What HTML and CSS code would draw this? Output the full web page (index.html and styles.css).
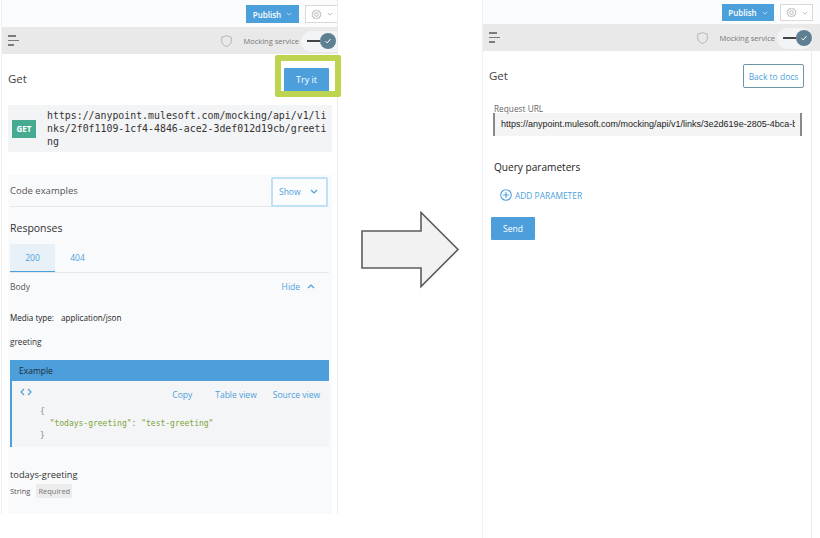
FILE: index.html
```html
<!DOCTYPE html>
<html lang="en">
<head>
    <meta charset="UTF-8">
    <title>Mocking service - Try it</title>
    <link rel="stylesheet" href="styles.css">
</head>
<body>
    <div class="stage">
        <!-- docs view -->
        <section class="panel panel-docs">
            <div class="topstrip">
                <button class="btn-publish">Publish <svg class="chev-sm" viewBox="0 0 8 5"><path d="M1 1l3 3 3-3"/></svg></button>
                <button class="btn-gear">
                    <svg class="gear" viewBox="0 0 12 12"><circle cx="6" cy="6" r="2"/><path d="M6 1l1.2 1.2 1.7-.3.4 1.7 1.6.7-.7 1.7.7 1.7-1.6.6-.4 1.7-1.7-.3L6 11l-1.2-1.2-1.7.3-.4-1.7-1.6-.6.7-1.8-.7-1.7 1.6-.6.4-1.7 1.7.3z"/></svg>
                    <svg class="chev-sm chev-grey" viewBox="0 0 8 5"><path d="M1 1l3 3 3-3"/></svg>
                </button>
            </div>
            <div class="toolbar">
                <div class="burger"><i class="l1"></i><i class="l2"></i><i class="l3"></i></div>
                <svg class="shield" viewBox="0 0 11 12"><path d="M5.5.7L10.3 2.2V6c0 2.8-2 4.5-4.8 5.4C2.7 10.5.7 8.8.7 6V2.2z"/></svg>
                <span class="mock-label">Mocking service</span>
                <div class="toggle"><span class="track"></span><span class="thumb"><svg viewBox="0 0 8 8"><path d="M1.5 4.2l1.7 1.7 3.3-3.8"/></svg></span></div>
            </div>
            <div class="head head-docs">
                <h2>Get</h2>
                <button class="btn-primary btn-try">Try it</button>
            </div>
            <div class="highlight"></div>
            <div class="url-box">
                <span class="badge-get">GET</span>
                <code class="url-text">https://anypoint.mulesoft.com/mocking/api/v1/links/2f0f1109-1cf4-4846-ace2-3def012d19cb/greeting</code>
            </div>
            <div class="docs-body">
                <div class="code-row">
                    <span class="code-title">Code examples</span>
                    <button class="btn-show">Show <svg class="chev" viewBox="0 0 8 5"><path d="M1 1l3 3 3-3"/></svg></button>
                </div>
                <h3 class="responses">Responses</h3>
                <div class="tabs">
                    <span class="tab tab-on">200</span>
                    <span class="tab">404</span>
                </div>
                <div class="body-row">
                    <span>Body</span>
                    <span class="hide-link">Hide <svg class="chev" viewBox="0 0 8 5"><path d="M1 4l3-3 3 3"/></svg></span>
                </div>
                <p class="media"><span class="media-key">Media type:</span> application/json</p>
                <p class="greet">greeting</p>
                <div class="example">
                    <div class="example-head">Example</div>
                    <div class="example-body">
                        <div class="example-tools">
                            <svg class="code-icon" viewBox="0 0 12 8"><path d="M4 1L1 4l3 3M8 1l3 3-3 3"/></svg>
                            <span class="tool tool-copy">Copy</span>
                            <span class="tool tool-table">Table view</span>
                            <span class="tool">Source view</span>
                        </div>
                        <pre class="json"><span class="p">{</span>
  <span class="s">"todays-greeting"</span><span class="p">:</span> <span class="s">"test-greeting"</span>
<span class="p">}</span></pre>
                    </div>
                </div>
                <div class="prop-name">todays-greeting</div>
                <div class="prop-meta"><span>String</span><span class="chip">Required</span></div>
            </div>
        </section>

        <svg class="arrow" viewBox="0 0 100 78"><path d="M2 20H61V1.5L98 38.5 61 75.5V57H2z"/></svg>

        <!-- try it view -->
        <section class="panel panel-try">
            <div class="topstrip topstrip-try">
                <button class="btn-publish">Publish <svg class="chev-sm" viewBox="0 0 8 5"><path d="M1 1l3 3 3-3"/></svg></button>
                <button class="btn-gear btn-gear-full">
                    <svg class="gear" viewBox="0 0 12 12"><circle cx="6" cy="6" r="2"/><path d="M6 1l1.2 1.2 1.7-.3.4 1.7 1.6.7-.7 1.7.7 1.7-1.6.6-.4 1.7-1.7-.3L6 11l-1.2-1.2-1.7.3-.4-1.7-1.6-.6.7-1.8-.7-1.7 1.6-.6.4-1.7 1.7.3z"/></svg>
                    <svg class="chev-sm chev-grey" viewBox="0 0 8 5"><path d="M1 1l3 3 3-3"/></svg>
                </button>
            </div>
            <div class="toolbar toolbar-try">
                <div class="burger"><i class="l1"></i><i class="l2"></i><i class="l3"></i></div>
                <svg class="shield" viewBox="0 0 11 12"><path d="M5.5.7L10.3 2.2V6c0 2.8-2 4.5-4.8 5.4C2.7 10.5.7 8.8.7 6V2.2z"/></svg>
                <span class="mock-label">Mocking service</span>
                <div class="toggle toggle-full"><span class="track"></span><span class="thumb"><svg viewBox="0 0 8 8"><path d="M1.5 4.2l1.7 1.7 3.3-3.8"/></svg></span></div>
            </div>
            <div class="head head-try">
                <h2>Get</h2>
                <button class="btn-back">Back to docs</button>
            </div>
            <div class="form">
                <label class="url-label">Request URL</label>
                <div class="url-input"><span class="url-value">https://anypoint.mulesoft.com/mocking/api/v1/links/3e2d619e-2805-4bca-b</span></div>
                <h3 class="query">Query parameters</h3>
                <div class="add-param">
                    <svg class="plus" viewBox="0 0 12 12"><circle cx="6" cy="6" r="5.3"/><path d="M6 3v6M3 6h6"/></svg>
                    ADD PARAMETER
                </div>
                <button class="btn-primary btn-send">Send</button>
            </div>
        </section>
    </div>
</body>
</html>
```

FILE: styles.css
```css
* {
    box-sizing: border-box;
}
body {
    margin: 0;
    background: #fff;
    font-family: "Open Sans", "Liberation Sans", sans-serif;
    color: #333;
}
button {
    font-family: inherit;
    cursor: pointer;
}
h2, h3, p, pre {
    margin: 0;
    font-weight: 400;
}
.stage {
    display: flex;
    align-items: flex-start;
    width: 820px;
    height: 538px;
    overflow: hidden;
}
.panel {
    position: relative;
    border-left: 1px solid #f0f0f0;
    border-right: 1px solid #ececec;
}
.panel-docs {
    width: 337px;
    height: 514px;
    margin-left: 1px;
}
.panel-try {
    flex: none;
    width: 330px;
    height: 538px;
    margin-left: 22px;
}
.arrow {
    flex: none;
    width: 100px;
    height: 78px;
    margin: 211px 0 0 22px;
}
.arrow path {
    fill: #f2f2f2;
    stroke: #5c5c5c;
    stroke-width: 1.6;
}

/* top strip */
.topstrip {
    display: flex;
    justify-content: flex-end;
    gap: 6px;
    height: 27px;
    padding-top: 5px;
    background: #fbfcfd;
}
.topstrip-try {
    height: 24px;
    margin-right: -9px;
    padding-top: 4px;
    padding-right: 7px;
}
.btn-publish {
    display: flex;
    align-items: center;
    justify-content: center;
    gap: 5px;
    width: 53px;
    height: 18px;
    padding: 0;
    border: 0;
    background: #4b9fdb;
    color: #fff;
    font-size: 8px;
    font-weight: 600;
}
.topstrip-try .btn-publish {
    width: 52px;
    height: 17px;
}
.btn-gear {
    display: flex;
    align-items: center;
    gap: 5px;
    width: 32px;
    height: 18px;
    padding: 0 0 0 5px;
    border: 1px solid #d9d9d9;
    border-right: 0;
    background: #fff;
}
.btn-gear-full {
    width: 33px;
    height: 17px;
    border-right: 1px solid #d9d9d9;
}
.gear {
    width: 11px;
    height: 11px;
    fill: none;
    stroke: #a3a3a3;
    stroke-width: .8;
}
.chev-sm {
    width: 6px;
    height: 4px;
    fill: none;
    stroke: #dbeaf6;
    stroke-width: 1;
}
.chev-grey {
    stroke: #a8a8a8;
}

/* grey toolbar */
.toolbar {
    display: flex;
    align-items: center;
    height: 27px;
    padding-left: 6px;
    background: #e9e9e9;
}
.toolbar-try {
    margin-right: -9px;
    padding-right: 7px;
}
.burger {
    display: flex;
    flex-direction: column;
    gap: 3px;
    margin-right: auto;
}
.burger i {
    display: block;
    height: 1.5px;
    background: #7b7b7b;
}
.burger .l1 { width: 8px; }
.burger .l2 { width: 11px; }
.burger .l3 { width: 6px; }
.shield {
    width: 11px;
    height: 12px;
    margin-right: 11px;
    fill: none;
    stroke: #b0b0b0;
    stroke-width: .9;
}
.mock-label {
    margin-right: 2px;
    font-size: 7.5px;
    color: #777;
}
.toggle {
    display: flex;
    align-items: center;
    width: 36px;
    height: 21px;
    margin-top: 1px;
    padding-left: 6px;
    border-radius: 11px 0 0 11px;
    background: #f3f4f5;
}
.toggle-full {
    border-radius: 11px;
}
.track {
    width: 13px;
    height: 1.5px;
    background: #444;
}
.thumb {
    display: flex;
    align-items: center;
    justify-content: center;
    width: 16px;
    height: 16px;
    border-radius: 50%;
    background: #5f7f93;
}
.thumb svg {
    width: 8px;
    height: 8px;
    fill: none;
    stroke: #fff;
    stroke-width: 1;
}

/* heading rows */
.head {
    display: flex;
    align-items: center;
    justify-content: space-between;
}
.head h2 {
    margin-top: -2px;
    font-size: 11.5px;
    color: #444;
}
.head-docs {
    height: 37px;
    margin-top: 7px;
    padding: 0 8px 0 6px;
}
.head-try {
    height: 24px;
    margin-top: 13px;
    padding: 0 7px 0 6px;
}
.btn-primary {
    border: 0;
    border-radius: 1px;
    background: #4d9fdb;
    color: #fff;
    font-size: 9px;
}
.btn-try {
    width: 45px;
    height: 24px;
}
.highlight {
    position: absolute;
    left: 273px;
    top: 55px;
    width: 66px;
    height: 42px;
    border: 6px solid #bcd44f;
    border-radius: 2px;
    pointer-events: none;
}
.btn-back {
    width: 61px;
    height: 24px;
    padding: 0;
    border: 1px solid #6f95a8;
    border-radius: 2px;
    background: #fff;
    color: #4d9fdb;
    font-size: 8.5px;
}

/* url block */
.url-box {
    display: flex;
    align-items: center;
    width: 324px;
    height: 47px;
    margin: 7px 0 0 6px;
    padding-left: 4px;
    background: #f3f4f6;
}
.badge-get {
    flex: none;
    width: 24px;
    height: 18px;
    margin-right: 11px;
    background: #47ab92;
    color: #fff;
    font-size: 8px;
    font-weight: 700;
    line-height: 18px;
    text-align: center;
}
.url-text {
    width: 282px;
    padding-top: 2px;
    font-family: "DejaVu Sans Mono", "Liberation Mono", monospace;
    font-size: 9.9px;
    line-height: 12.7px;
    color: #333;
    word-break: break-all;
}

/* docs body */
.docs-body {
    width: 324px;
    height: 339px;
    margin: 23px 0 0 6px;
    padding: 2px 3px 0 2px;
    background: #f9fafc;
}
.code-row {
    display: flex;
    align-items: center;
    justify-content: space-between;
    height: 30px;
    border-bottom: 1px solid #e6e8ea;
    font-size: 9.5px;
    color: #555;
}
.code-title {
    padding-bottom: 2px;
}
.btn-show {
    display: flex;
    align-items: center;
    gap: 9px;
    width: 57px;
    height: 30px;
    padding: 0 0 0 6px;
    margin-right: 1px;
    border: 2px solid #bfe1f3;
    border-radius: 2px;
    background: #fafcfd;
    color: #4d9fdb;
    font-size: 8.5px;
}
.chev {
    width: 8px;
    height: 5px;
    fill: none;
    stroke: #4d9fdb;
    stroke-width: 1.2;
}
.responses {
    margin-top: 14px;
    font-size: 10.5px;
    color: #333;
}
.tabs {
    display: flex;
    height: 29px;
    margin-top: 9px;
    border-bottom: 1px solid #e6e8ea;
}
.tab {
    width: 45px;
    height: 28px;
    font-size: 8.5px;
    line-height: 28px;
    text-align: center;
    color: #4d9fdb;
}
.tab-on {
    background: #e8f1f8;
    border-bottom: 1px solid #4d9fdb;
}
.body-row {
    display: flex;
    justify-content: space-between;
    padding: 8px 14px 0 0;
    font-size: 8.5px;
    color: #555;
}
.hide-link {
    display: flex;
    align-items: center;
    gap: 7px;
    color: #4d9fdb;
}
.media {
    margin-top: 20px;
    font-size: 8.1px;
    color: #222;
}
.media-key {
    margin-right: 5px;
}
.greet {
    margin-top: 13px;
    font-size: 8.2px;
    color: #333;
}
.example {
    margin-top: 13px;
}
.example-head {
    height: 21px;
    padding-left: 9px;
    background: #4d9fdb;
    font-size: 8.5px;
    line-height: 21px;
    color: #1c2b38;
}
.example-body {
    height: 66px;
    border-left: 2px solid #4d9fdb;
    background: #f3f5f7;
}
.example-tools {
    display: flex;
    align-items: center;
    height: 25px;
    padding: 1px 9px 0 8px;
    font-size: 8.5px;
    color: #4d9fdb;
}
.code-icon {
    width: 12px;
    height: 8px;
    margin: -4px auto 0 0;
    fill: none;
    stroke: #4d9fdb;
    stroke-width: 1.2;
}
.tool-copy {
    margin-right: 23px;
}
.tool-table {
    margin-right: 16px;
}
.json {
    padding-left: 28px;
    font-family: "DejaVu Sans Mono", "Liberation Mono", monospace;
    font-size: 8px;
    line-height: 12px;
}
.json .s {
    color: #7da33a;
}
.json .p {
    color: #8a8a8a;
}
.prop-name {
    margin-top: 21px;
    font-size: 9.3px;
    color: #333;
}
.prop-meta {
    display: flex;
    align-items: center;
    gap: 6px;
    margin-top: 3px;
    font-size: 7.5px;
    color: #555;
}
.chip {
    padding: 2px 2px;
    border-radius: 2px;
    background: #ececec;
    color: #777;
}

/* try it form */
.form {
    padding: 15px 9px 0 11px;
}
.url-label {
    display: block;
    font-size: 8.3px;
    color: #666;
}
.url-input {
    width: 309px;
    height: 23px;
    margin: -1px 0 0 -1px;
    padding: 0 5px 0 6px;
    border-left: 2px solid #8a8a8a;
    border-right: 2px solid #8a8a8a;
    background: #f4f4f4;
}
.url-value {
    display: block;
    overflow: hidden;
    font-family: "Liberation Sans", Arial, sans-serif;
    font-size: 9px;
    line-height: 23px;
    color: #222;
    white-space: nowrap;
}
.query {
    margin-top: 24px;
    font-size: 10.1px;
    color: #222;
}
.add-param {
    display: flex;
    align-items: center;
    gap: 3px;
    margin: 15px 0 0 6px;
    font-size: 8.4px;
    color: #4d9fdb;
}
.plus {
    width: 12px;
    height: 12px;
    fill: none;
    stroke: #4d9fdb;
    stroke-width: 1.1;
}
.btn-send {
    display: block;
    width: 44px;
    height: 23px;
    margin: 16px 0 0 -3px;
    font-size: 8.5px;
}
```
